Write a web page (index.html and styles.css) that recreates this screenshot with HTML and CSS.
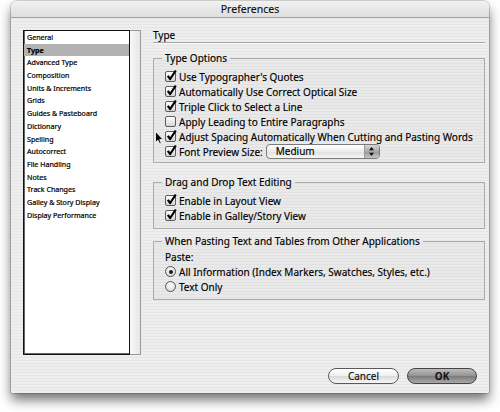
FILE: index.html
```html
<!DOCTYPE html>
<html>
<head>
<meta charset="utf-8">
<title>Preferences</title>
<link rel="stylesheet" href="styles.css">
</head>
<body>
<div class="window">
  <div class="titlebar">Preferences</div>
  <div class="body">
    <div class="content">
      <div class="listbox">
        <ul class="list">
          <li>General</li>
          <li class="sel">Type</li>
          <li>Advanced Type</li>
          <li>Composition</li>
          <li>Units &amp; Increments</li>
          <li>Grids</li>
          <li>Guides &amp; Pasteboard</li>
          <li>Dictionary</li>
          <li>Spelling</li>
          <li>Autocorrect</li>
          <li>File Handling</li>
          <li>Notes</li>
          <li>Track Changes</li>
          <li>Galley &amp; Story Display</li>
          <li>Display Performance</li>
        </ul>
        <div class="track"></div>
      </div>
      <div class="main">
        <div class="heading">Type</div>
        <fieldset class="group g1">
          <legend>Type Options</legend>
          <div class="row"><span class="cb on"><svg viewBox="0 0 11 12"><path d="M1.8 6.8 L4.2 10 L9.8 1.5"/></svg></span>Use Typographer's Quotes</div>
          <div class="row"><span class="cb on"><svg viewBox="0 0 11 12"><path d="M1.8 6.8 L4.2 10 L9.8 1.5"/></svg></span>Automatically Use Correct Optical Size</div>
          <div class="row"><span class="cb on"><svg viewBox="0 0 11 12"><path d="M1.8 6.8 L4.2 10 L9.8 1.5"/></svg></span>Triple Click to Select a Line</div>
          <div class="row"><span class="cb"></span>Apply Leading to Entire Paragraphs</div>
          <div class="row"><span class="cb on"><svg viewBox="0 0 11 12"><path d="M1.8 6.8 L4.2 10 L9.8 1.5"/></svg></span>Adjust Spacing Automatically When Cutting and Pasting Words</div>
          <div class="row"><span class="cb on"><svg viewBox="0 0 11 12"><path d="M1.8 6.8 L4.2 10 L9.8 1.5"/></svg></span>Font Preview Size:
            <span class="popup"><span class="pv">Medium</span><span class="arrows"><svg viewBox="0 0 7 11"><path d="M3.5 1 L6 4.2 L1 4.2 Z M1 6.8 L6 6.8 L3.5 10 Z"/></svg></span></span>
          </div>
        </fieldset>
        <fieldset class="group g2">
          <legend>Drag and Drop Text Editing</legend>
          <div class="row"><span class="cb on"><svg viewBox="0 0 11 12"><path d="M1.8 6.8 L4.2 10 L9.8 1.5"/></svg></span>Enable in Layout View</div>
          <div class="row"><span class="cb on"><svg viewBox="0 0 11 12"><path d="M1.8 6.8 L4.2 10 L9.8 1.5"/></svg></span>Enable in Galley/Story View</div>
        </fieldset>
        <fieldset class="group g3">
          <legend>When Pasting Text and Tables from Other Applications</legend>
          <div class="row">Paste:</div>
          <div class="row"><span class="rb on"></span>All Information (Index Markers, Swatches, Styles, etc.)</div>
          <div class="row"><span class="rb"></span>Text Only</div>
        </fieldset>
      </div>
    </div>
    <div class="buttons">
      <button class="btn">Cancel</button>
      <button class="btn ok">OK</button>
    </div>
  </div>
  <svg class="cursor" viewBox="0 0 9 14"><path d="M0.5 0.5 L0.5 11.5 L3 9.2 L4.7 13 L6.3 12.3 L4.7 8.6 L8 8.6 Z"/></svg>
</div>
</body>
</html>
```

FILE: styles.css
```css
html, body {
  margin: 0;
  padding: 0;
  background: #ffffff;
  width: 500px;
  height: 412px;
  overflow: hidden;
}

body {
  font-family: "Noto Sans", "DejaVu Sans", sans-serif;
  color: #000;
}

.window {
  position: relative;
  margin: 1px 0 0 11px;
  width: 478px;
  height: 392px;
  border-radius: 6px 6px 2px 2px;
  background: repeating-linear-gradient(to bottom, #eeeeee 0, #eeeeee 2px, #e6e6e6 2px, #e6e6e6 3px);
  box-shadow: 0 7px 12px rgba(0, 0, 0, 0.55), 0 0 0 1px rgba(0, 0, 0, 0.16);
  display: flex;
  flex-direction: column;
}

.titlebar {
  height: 16px;
  line-height: 16px;
  text-align: center;
  font-size: 10.5px;
  color: #111;
  -webkit-text-stroke: 0.15px #111;
  border-radius: 6px 6px 0 0;
  border-bottom: 1px solid #a2a2a2;
  background: linear-gradient(to bottom, #f2f2f2, #dedede);
}

.body {
  flex: 1;
  display: flex;
  flex-direction: column;
  padding: 12px 12px 9px 12px;
}

.content {
  display: flex;
  gap: 12px;
  height: 325px;
}

.listbox {
  width: 118px;
  height: 325px;
  display: flex;
  flex: none;
}

.list {
  list-style: none;
  margin: 0;
  padding: 0;
  width: 105px;
  background: #fff;
  border: 1px solid #111;
  box-shadow: inset 1px 0 0 #666, inset 0 -1px 0 #666;
  font-size: 7.1px;
  -webkit-text-stroke: 0.2px #000;
}

.list li {
  height: 12.7px;
  line-height: 12.7px;
  padding-left: 3px;
  white-space: nowrap;
}

.list li.sel {
  background: #b2b2b2;
  font-weight: bold;
}

.track {
  width: 10px;
  border: 1px solid #9a9a9a;
  border-left: none;
  background: linear-gradient(to right, #f8f8f8, #e6e6e6);
}

.main {
  flex: 1;
  display: flex;
  flex-direction: column;
  font-size: 10px;
  -webkit-text-stroke: 0.15px #000;
}

.heading {
  line-height: 11px;
  padding-bottom: 1px;
  border-bottom: 1px solid #a4a4a4;
  box-shadow: 0 1px 0 #fafafa;
}

.group {
  margin: 0;
  min-width: 0;
  border: 1px solid #ababab;
  background: rgba(0, 0, 0, 0.02);
  padding: 5px 11px 3px 11px;
}

.group legend {
  padding: 0 3px;
  margin-left: -3px;
  line-height: 12px;
}

.g1 { margin-top: 9px; }
.g2 { margin-top: 13px; padding-bottom: 5px; }
.g3 { margin-top: 6px; padding-top: 2px; padding-bottom: 5px; }

.row {
  height: 15px;
  display: flex;
  align-items: center;
  white-space: nowrap;
}

.cb {
  position: relative;
  flex: none;
  width: 9px;
  height: 9px;
  margin-right: 3px;
  border: 1px solid #5c5c5c;
  border-radius: 2px;
  background: linear-gradient(to bottom, #ffffff, #d4d4d4);
}

.cb svg {
  position: absolute;
  left: 0;
  top: -3px;
  width: 11px;
  height: 12px;
}

.cb svg path {
  fill: none;
  stroke: #000;
  stroke-width: 2.2;
  stroke-linejoin: round;
}

.rb {
  flex: none;
  width: 9px;
  height: 9px;
  margin-right: 3px;
  border: 1px solid #555;
  border-radius: 50%;
  background: radial-gradient(circle at 50% 35%, #ffffff, #d0d0d0);
  display: flex;
  align-items: center;
  justify-content: center;
}

.rb.on::after {
  content: "";
  width: 4px;
  height: 4px;
  border-radius: 50%;
  background: #1a1a1a;
}

.popup {
  margin-left: 3px;
  width: 112px;
  height: 13px;
  display: flex;
  border: 1px solid #7a7a7a;
  border-radius: 4px;
  background: linear-gradient(to bottom, #ffffff, #ececec 50%, #e0e0e0 51%, #f6f6f6);
  overflow: hidden;
}

.pv {
  flex: 1;
  padding-left: 9px;
  line-height: 13px;
}

.arrows {
  width: 14px;
  display: flex;
  align-items: center;
  justify-content: center;
  border-left: 1px solid #9a9a9a;
  background: linear-gradient(to bottom, #d6d6d6, #a8a8a8 50%, #999 51%, #c4c4c4);
}

.arrows svg {
  width: 7px;
  height: 11px;
}

.arrows path { fill: #111; }

.buttons {
  margin-top: 13px;
  display: flex;
  justify-content: flex-end;
  gap: 8px;
}

.btn {
  height: 16px;
  width: 71px;
  padding: 0;
  border: 1px solid #5a5a5a;
  border-radius: 8px;
  font-family: "Noto Sans", "DejaVu Sans", sans-serif;
  font-size: 10px;
  line-height: 14px;
  color: #111;
  -webkit-text-stroke: 0.15px #111;
  background: linear-gradient(to bottom, #ffffff, #eeeeee 50%, #dadada 51%, #f6f6f6);
}

.btn.ok {
  width: 70px;
  font-weight: bold;
  -webkit-text-stroke: 0;
  border-color: #444;
  background: linear-gradient(to bottom, #bdbdbd, #929292 50%, #7a7a7a 51%, #a8a8a8);
}

.cursor {
  position: absolute;
  left: 144px;
  top: 130px;
  width: 9px;
  height: 14px;
}

.cursor path {
  fill: #000;
  stroke: #fff;
  stroke-width: 0.8;
}
```
